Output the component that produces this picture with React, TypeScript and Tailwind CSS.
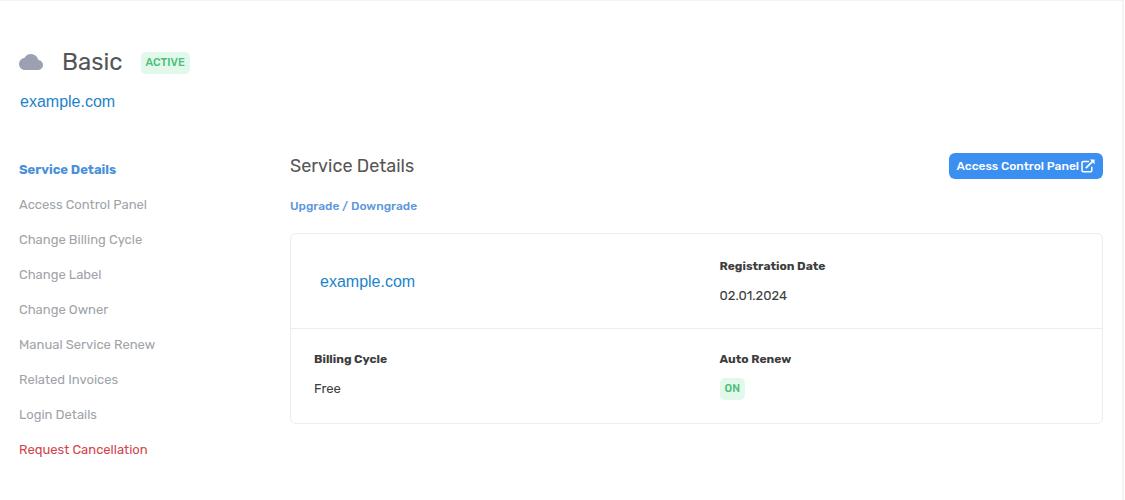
import type { ReactNode } from "react";
import { MdCloud } from "react-icons/md";

const NAV_ITEMS = [
  "Service Details",
  "Access Control Panel",
  "Change Billing Cycle",
  "Change Label",
  "Change Owner",
  "Manual Service Renew",
  "Related Invoices",
  "Login Details",
  "Request Cancellation",
];

function navColor(item: string) {
  if (item === "Service Details") return "font-bold text-[#4a90dc]";
  if (item === "Request Cancellation") return "text-[#d0454c]";
  return "text-[#a0a4a9]";
}

function Badge({ children }: { children: ReactNode }) {
  return (
    <span className="inline-flex h-[22px] items-center rounded-[5px] bg-[#e1f8ea] px-[5px] text-[11px] font-medium text-[#4abf78]">
      {children}
    </span>
  );
}

function Detail({ label, children }: { label: string; children: ReactNode }) {
  return (
    <div>
      <dt className="text-[12px] leading-5 font-bold text-[#3d3d3d]">{label}</dt>
      <dd className="mt-[9px] text-[13px] leading-[22px] text-[#3d3d3d]">{children}</dd>
    </div>
  );
}

function ExternalIcon() {
  return (
    <svg viewBox="0 0 14 14" className="h-[14px] w-[14px]" fill="none" aria-hidden="true">
      <path
        d="M8 2.6H2.2Q1 2.6 1 3.8V11.6Q1 12.8 2.2 12.8H9.6Q10.8 12.8 10.8 11.6V7.8"
        stroke="currentColor"
        strokeWidth="1.5"
      />
      <path d="M4.8 9.2L11.4 2.6" stroke="currentColor" strokeWidth="1.8" />
      <path d="M8.8 0.5H13.6V5.3Z" fill="currentColor" />
    </svg>
  );
}

export default function App() {
  return (
    <div className="mr-px min-h-screen border-t border-r-2 border-[#f3f3f3] bg-white pt-[45px] pr-[19px] pb-8 pl-[19px] font-[Rubik,Roboto,sans-serif]">
      <header>
        <div className="flex h-8 items-center">
          <MdCloud className="h-6 w-6 text-[#9d9fb3]" />
          <h1 className="ml-[19px] text-[24px] leading-8 text-[#555555]">Basic</h1>
          <div className="mt-0.5 ml-[18px] flex">
            <Badge>ACTIVE</Badge>
          </div>
        </div>
        <a
          href="#"
          className="mt-3 ml-px inline-block font-['Liberation_Sans',Arial,sans-serif] text-[16px] leading-6 text-[#1c84c9]"
        >
          example.com
        </a>
      </header>

      <div className="mt-[38px] flex">
        <nav className="w-[271px] shrink-0">
          <ul>
            {NAV_ITEMS.map((item) => (
              <li key={item} className="h-[35px]">
                <a href="#" className={`block text-[13px] leading-[35px] ${navColor(item)}`}>
                  {item}
                </a>
              </li>
            ))}
          </ul>
        </nav>

        <main className="min-w-0 flex-1">
          <div className="flex h-7 items-center justify-between">
            <h2 className="text-[18px] leading-7 text-[#555555]">Service Details</h2>
            <button
              type="button"
              className="flex h-[26px] items-center gap-0.5 rounded-md bg-[#3a8ff0] px-2 text-[12px] font-medium text-white"
            >
              Access Control Panel
              <ExternalIcon />
            </button>
          </div>
          <a href="#" className="mt-[14px] block w-fit text-[12px] leading-6 font-medium text-[#5b98dc]">
            Upgrade / Downgrade
          </a>

          <dl className="mt-[15px] rounded-md border border-[#ededed]">
            <div className="grid grid-cols-2 px-[23px] pt-[22px] pb-[21px]">
              <div className="flex items-center">
                <a
                  href="#"
                  className="ml-1.5 font-['Liberation_Sans',Arial,sans-serif] text-[16px] leading-6 text-[#1c84c9]"
                >
                  example.com
                </a>
              </div>
              <div className="pl-[23px]">
                <Detail label="Registration Date">02.01.2024</Detail>
              </div>
            </div>
            <div className="grid grid-cols-2 border-t border-[#ededed] px-[23px] pt-5 pb-[23px]">
              <Detail label="Billing Cycle">Free</Detail>
              <div className="pl-[23px]">
                <Detail label="Auto Renew">
                  <span className="flex">
                    <Badge>ON</Badge>
                  </span>
                </Detail>
              </div>
            </div>
          </dl>
        </main>
      </div>
    </div>
  );
}
